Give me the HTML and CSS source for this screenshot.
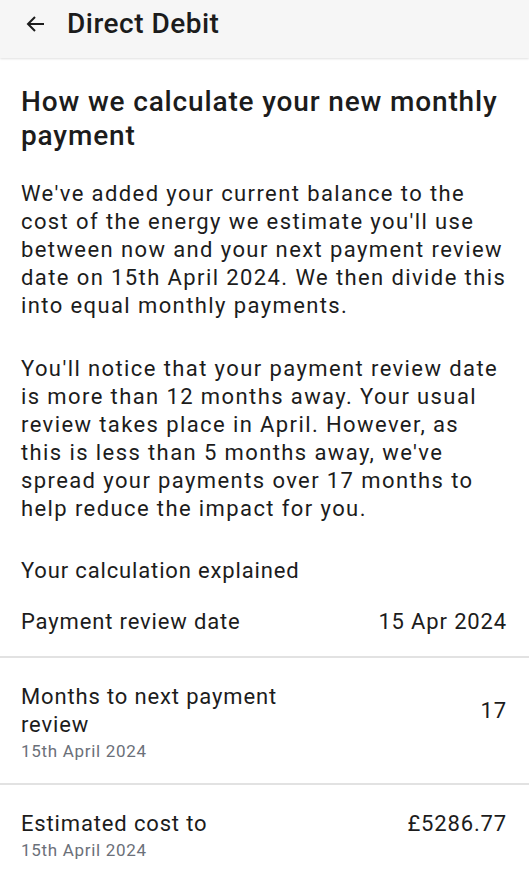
FILE: index.html
```html
<!DOCTYPE html>
<html lang="en">
<head>
<meta charset="utf-8">
<link rel="stylesheet" href="styles.css">
</head>
<body>
<header class="appbar">
  <svg class="back" width="24" height="24" viewBox="0 0 24 24" aria-hidden="true"><path d="M20 12H4.5M11 5l-7 7 7 7" fill="none" stroke="#1c1c1c" stroke-width="2"/></svg>
  <h1 class="appbar-title">Direct Debit</h1>
</header>
<main class="content">
  <section class="intro">
    <h2 class="heading">How we calculate your new monthly payment</h2>
    <p class="body">We've added your current balance to the cost of the energy we estimate you'll use between now and your next payment review date on 15th April 2024. We then divide this into equal monthly payments.</p>
    <p class="body">You'll notice that your payment review date is more than 12 months away. Your usual review takes place in April. However, as<br>this is less than 5 months away, we've spread your payments over 17 months to help reduce the impact for you.</p>
    <p class="section-label">Your calculation explained</p>
  </section>
  <div class="rows">
    <div class="row">
      <span class="label">Payment review date</span>
      <span class="value">15 Apr 2024</span>
    </div>
    <div class="row">
      <span class="label">Months to next payment review</span>
      <span class="value">17</span>
      <span class="sub">15th April 2024</span>
    </div>
    <div class="row">
      <span class="label">Estimated cost to</span>
      <span class="value">£5286.77</span>
      <span class="sub">15th April 2024</span>
    </div>
  </div>
</main>
</body>
</html>
```
FILE: styles.css
```css
* { box-sizing: border-box; }
html, body { margin: 0; padding: 0; }
body {
  font-family: Roboto, "Noto Sans", sans-serif;
  color: #1c1c1c;
  background: #fff;
  width: 529px;
  overflow: hidden;
}
.appbar {
  height: 58px;
  background: #f6f6f6;
  display: flex;
  align-items: center;
  padding-left: 24px;
  box-shadow: 0 1px 2px rgba(0,0,0,0.12);
  position: relative;
}
.back { display: block; margin-top: -10px; }
.appbar-title {
  margin: -10px 0 0 19px;
  font-size: 28px;
  font-weight: 500;
  line-height: 34px;
  letter-spacing: 0.5px;
  color: #1c1c1c;
}
.intro { padding: 0 19px 0 21px; }
.heading {
  margin: 27px 0 0;
  font-size: 28px;
  font-weight: 500;
  line-height: 34px;
  letter-spacing: 0.85px;
  color: #1c1c1c;
}
.body {
  margin: 27px 0 0;
  font-size: 22px;
  line-height: 28px;
  letter-spacing: 1.4px;
  color: #1c1c1c;
}
.body + .body { margin-top: 35px; }
.section-label {
  margin: 34px 0 0;
  font-size: 22px;
  line-height: 28px;
  letter-spacing: 0.85px;
}
.row {
  display: grid;
  grid-template-columns: 1fr auto;
  column-gap: 24px;
  align-items: center;
  padding: 25px 22px 20px 21px;
  border-bottom: 2px solid #e2e2e2;
  font-size: 22px;
  line-height: 28px;
  letter-spacing: 0.85px;
}
.rows .row:first-child { padding-top: 23px; padding-bottom: 20px; }
.label { grid-column: 1; grid-row: 1; max-width: 290px; }
.value { grid-column: 2; grid-row: 1; text-align: right; }
.sub {
  grid-column: 1; grid-row: 2;
  font-size: 17px;
  line-height: 24px;
  color: #6b7079;
  letter-spacing: 0.7px;
}
```
